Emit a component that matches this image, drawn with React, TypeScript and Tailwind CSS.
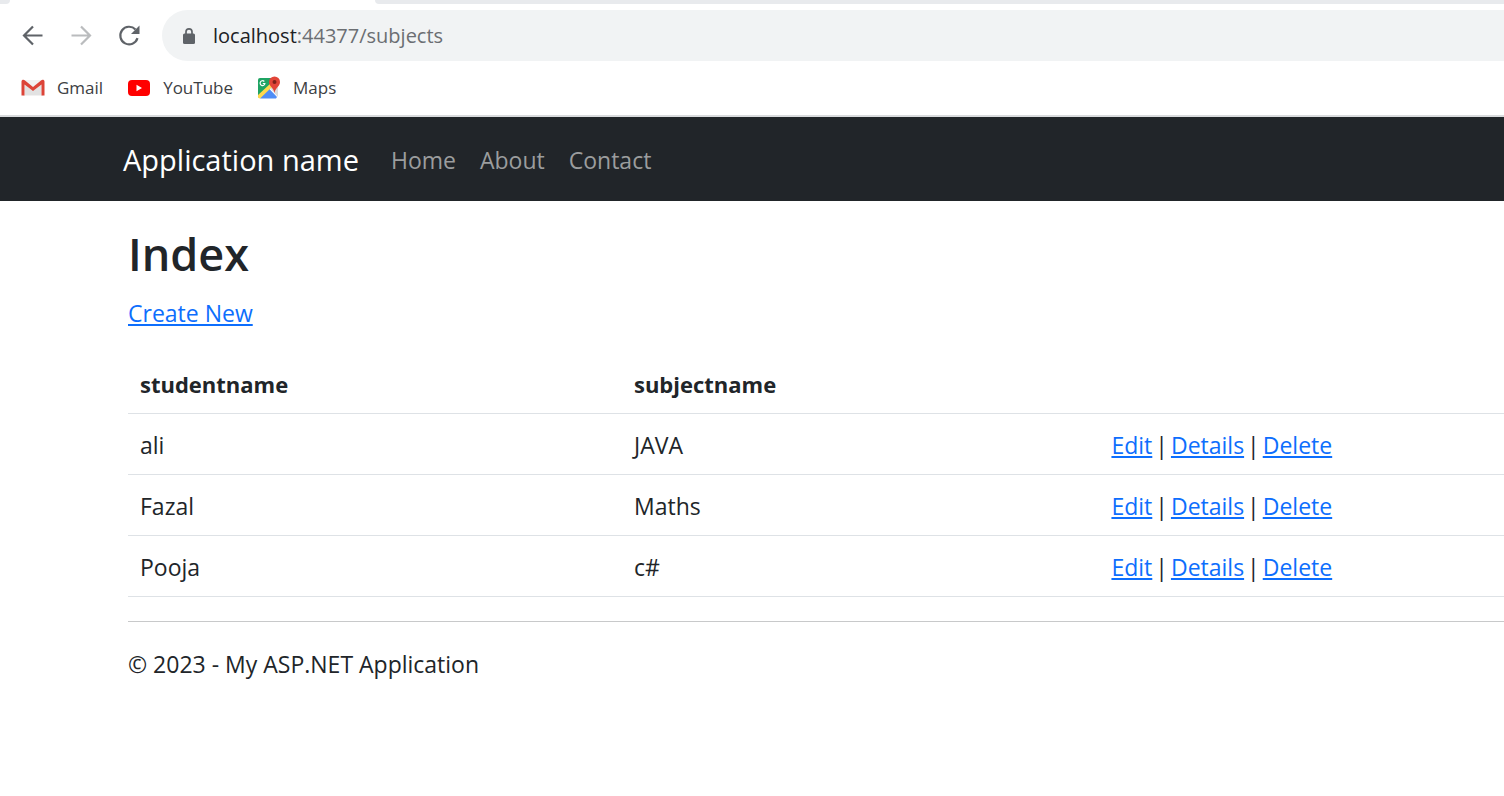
import React from "react";

const subjects = [
  { student: "ali", subject: "JAVA" },
  { student: "Fazal", subject: "Maths" },
  { student: "Pooja", subject: "c#" },
];

function GmailIcon() {
  return (
    <svg width="24" height="24" viewBox="0 0 24 24" aria-hidden="true">
      <path d="M2 4h20v16H2z" fill="#f1f1f1" />
      <path d="M4 19V9l8 6 8-6v10z" fill="#e2e2e2" />
      <path d="M.5 5.500C.5 4 2.500 3.200 4 4.500l8 6.500 8-6.500c1.500-1.300 3.500-.5 3.500 1V19.500h-3V8.500L12 15 3.500 8.500v11h-3z" fill="#dc4438" />
    </svg>
  );
}

function YouTubeIcon() {
  return (
    <svg width="24" height="24" viewBox="0 0 24 24" aria-hidden="true">
      <rect x="1" y="4" width="22" height="16" rx="4" fill="#f00" />
      <path d="M9.500 8.800v6.400l5.500-3.200z" fill="#fff" />
    </svg>
  );
}

function MapsIcon() {
  return (
    <svg width="24" height="24" viewBox="0 0 24 24" aria-hidden="true">
      <path d="M3 2h13v7L3 22a2 2 0 0 1-2-2V4a2 2 0 0 1 2-2z" fill="#1fa463" />
      <path d="m14 10 7-2v13l-8-9z" fill="#dcdcdc" />
      <path d="m11.500 12 8.500 9-1 1.500H3z" fill="#4f8df6" />
      <path d="M1 19 13.500 7.500l2 3L3 22.500A2 2 0 0 1 1 20z" fill="#ffd94d" />
      <path d="M7.300 5.500a2.400 2.400 0 1 0 .6 2H5.800" fill="none" stroke="#fff" strokeWidth="1.200" />
      <path d="M17.500.5a5.500 5.500 0 0 0-5.500 5.500c0 4.200 4.500 5.500 5.500 11 1-5.500 5.500-6.800 5.500-11A5.500 5.500 0 0 0 17.500.5z" fill="#e24538" />
      <circle cx="17.500" cy="6" r="2" fill="#7f2119" />
    </svg>
  );
}

const bookmarks = [
  { label: "Gmail", icon: <GmailIcon /> },
  { label: "YouTube", icon: <YouTubeIcon /> },
  { label: "Maps", icon: <MapsIcon /> },
];

function BrowserChrome() {
  return (
    <div className="border-b-2 border-[#d9dbdd]">
      <div className="flex h-1 bg-white">
        <div className="w-[10px] rounded-br-lg bg-[#e8eaed]" />
        <div className="w-[365px]" />
        <div className="flex-1 rounded-bl-lg bg-[#e8eaed]" />
      </div>
      <div className="flex items-center pt-[6px]">
        <div className="flex items-center gap-6 pr-[21px] pl-[21px]">
          <button type="button" aria-label="Back" className="text-[#5f6368]">
            <svg width="24" height="24" viewBox="0 0 24 24" fill="none" stroke="currentColor" strokeWidth="2.200">
              <path d="M21.500 11.500H3M12 2.500l-9 9 9 9" />
            </svg>
          </button>
          <button type="button" aria-label="Forward" className="text-[#babcbe]">
            <svg width="24" height="24" viewBox="0 0 24 24" fill="none" stroke="currentColor" strokeWidth="2.200">
              <path d="M2.500 11.500H21M12 2.500l9 9-9 9" />
            </svg>
          </button>
          <button type="button" aria-label="Reload" className="text-[#5f6368]">
            <svg width="24" height="24" viewBox="0 0 24 24" fill="none">
              <path d="M20.500 14.200A8.800 8.800 0 1 1 18.500 5.500" stroke="currentColor" strokeWidth="2.200" />
              <path d="M22.500 1.500V10H14z" fill="currentColor" />
            </svg>
          </button>
        </div>
        <div className="flex h-[51px] flex-1 items-center gap-[17px] rounded-l-full bg-[#f1f3f4] pl-5">
          <svg width="14" height="18" viewBox="0 0 14 18" aria-hidden="true">
            <rect x="1" y="6.500" width="12" height="10.500" rx="1.500" fill="#5f6368" />
            <path d="M4 8V4.800a3 3 0 0 1 6 0V8" fill="none" stroke="#5f6368" strokeWidth="1.700" />
          </svg>
          <div className="text-[20px] leading-7 text-[#6b6e72]">
            <span className="text-[#202124]">localhost</span>:44377/subjects
          </div>
        </div>
      </div>
      <nav aria-label="Bookmarks" className="flex h-[54px] items-center gap-6 pl-[21px] text-[17px] text-[#3c4043]">
        {bookmarks.map((b) => (
          <a key={b.label} href="#" className="flex items-center gap-3">
            {b.icon}
            {b.label}
          </a>
        ))}
      </nav>
    </div>
  );
}

export default function App() {
  const link = "text-[#0d6efd] underline decoration-2 underline-offset-2";
  const cell = "px-3 pt-[13px] pb-[11px]";
  return (
    <div className="min-h-screen overflow-x-hidden bg-white font-['Open_Sans','Noto_Sans',sans-serif] text-[23px] leading-9 text-[#212529]">
      <BrowserChrome />
      <header className="flex h-[84px] items-center bg-[#212529] pt-[2px] pl-[123px]">
        <a href="#" className="mr-8 text-[29px] text-white">Application name</a>
        <nav className="flex gap-6 text-[#9b9d9e]">
          <a href="#">Home</a>
          <a href="#">About</a>
          <a href="#">Contact</a>
        </nav>
      </header>
      <main className="pt-6 pl-32">
        <h2 className="mb-3 text-[45px] leading-[58px] font-semibold">Index</h2>
        <p className="mb-[22px]">
          <a href="#" className={link}>Create New</a>
        </p>
        <table className="w-full table-fixed border-collapse text-left">
          <colgroup>
            <col className="w-[35.9%]" />
            <col className="w-[34.7%]" />
            <col />
          </colgroup>
          <thead>
            <tr className="border-b border-[#dee2e6]">
              <th className={`${cell} text-[22px] font-bold`}>studentname</th>
              <th className={`${cell} text-[22px] font-bold`}>subjectname</th>
              <td />
            </tr>
          </thead>
          <tbody>
            {subjects.map((s) => (
              <tr key={s.student} className="border-b border-[#dee2e6]">
                <td className={cell}>{s.student}</td>
                <td className={cell}>{s.subject}</td>
                <td className={cell}>
                  <div className="flex gap-[3px]">
                    <a href="#" className={link}>Edit</a>
                    <span>|</span>
                    <a href="#" className={link}>Details</a>
                    <span>|</span>
                    <a href="#" className={link}>Delete</a>
                  </div>
                </td>
              </tr>
            ))}
          </tbody>
        </table>
        <hr className="my-6 border-[#c8c9ca]" />
        <footer>
          <p>© 2023 - My ASP.NET Application</p>
        </footer>
      </main>
    </div>
  );
}
